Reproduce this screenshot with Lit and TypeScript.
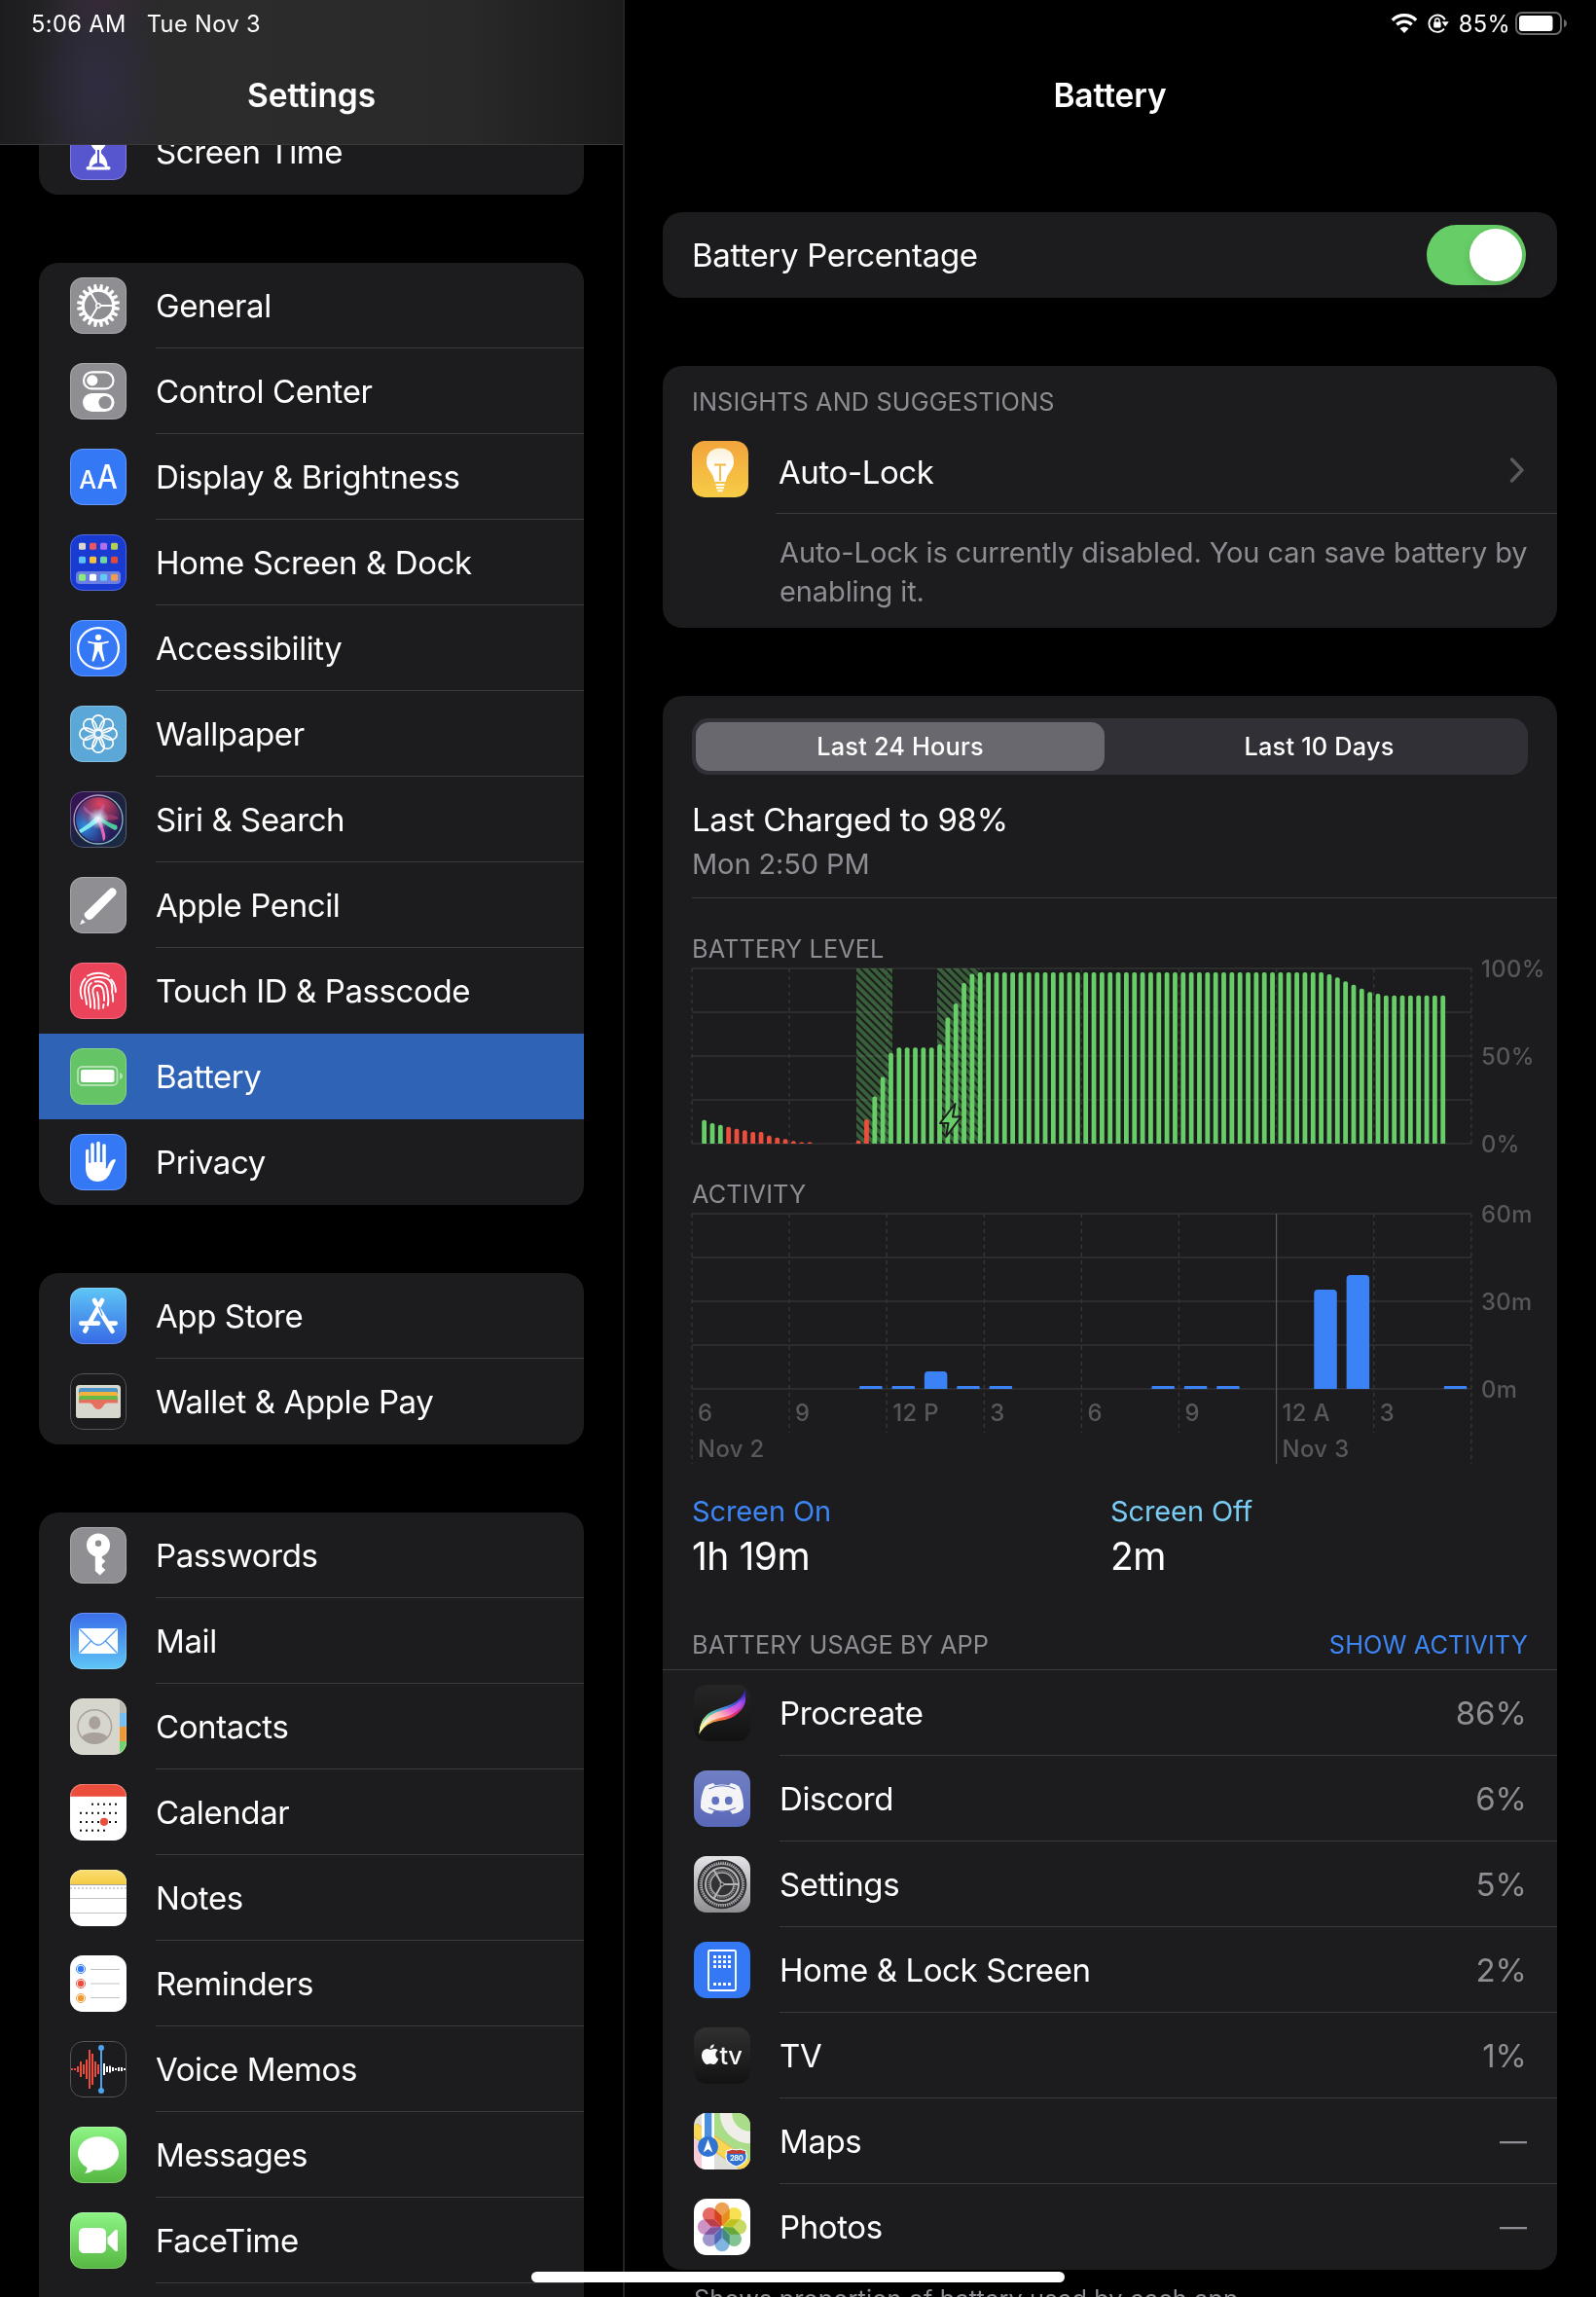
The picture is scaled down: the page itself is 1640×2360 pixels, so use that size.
import { LitElement, css, html, svg, nothing, SVGTemplateResult } from "lit"
import { customElement, property } from "lit/decorators.js"
import { classMap } from "lit/directives/class-map.js"

const FONT = css`Inter, "Liberation Sans", Arial, sans-serif`

const flat = (color: string) => svg`<rect width="58" height="58" fill=${color} />`

const fade = (from: string, to: string) => svg`
  <defs>
    <linearGradient id="bg" x1="0" y1="0" x2="0" y2="1">
      <stop offset="0" stop-color=${from} />
      <stop offset="1" stop-color=${to} />
    </linearGradient>
  </defs>
  <rect width="58" height="58" fill="url(#bg)" />
`

// outline of a cog centred on the 58px tile
const cog = (teeth: number, inner: number, outer: number, base = 0.34, tip = 0.2) => {
  const step = (Math.PI * 2) / teeth
  const at = (r: number, a: number) =>
    `${(29 + r * Math.cos(a)).toFixed(2)} ${(29 + r * Math.sin(a)).toFixed(2)}`
  let d = ""
  for (let i = 0; i < teeth; i++) {
    const a = (i + 0.5) * step
    d += `${i ? "L" : "M"}${at(inner, a - step * base)} L${at(outer, a - step * tip)} `
    d += `L${at(outer, a + step * tip)} L${at(inner, a + step * base)} `
  }
  return d + "Z"
}

const spin = (count: number, draw: (angle: number, i: number) => SVGTemplateResult) =>
  Array.from({ length: count }, (_, i) => draw((360 / count) * i, i))

const square = (x: number, y: number, size: number, fill: string, rx = 0) =>
  svg`<rect x=${x} y=${y} width=${size} height=${size} rx=${rx} fill=${fill} />`

const HOME_GRID = [
  [8.7, ["#d8d8d0", "#e8565f", "#b06ef0", "#b5d050"]],
  [22.7, ["#5fc0f5", "#f7c23c", "#70d6a5", "#e04a38"]],
  [40.7, ["#88ec7c", "#ffffff", "#62c8f8", "#ee9c55"]],
] as [number, string[]][]

const CALENDAR_ROWS = [
  [20.7, 2, 6],
  [29.8, 0, 6],
  [39, 0, 6],
  [47.7, 0, 4],
]

const MEMO_RED = [2, 2, 6, 16, 10, 20, 40, 32, 16, 10]
const MEMO_WHITE = [12, 6, 7, 4, 2, 4, 4, 2]

const PETALS = ["#ee9c48", "#f7e04a", "#c3d85a", "#7cc08c", "#7ab0e0", "#9a90cc", "#cc8dc2", "#e5625a"]

const ICONS: Record<string, () => SVGTemplateResult> = {
  "screen-time": () => svg`
    ${flat("#5856ce")}
    <path
      d="M18 9h22v3.500h-1.500c0 7-2.500 11.500-6.500 15v3c4 3.500 6.500 8.500 6.500 13.500h1.500q1.500 0 1.500 1.800t-1.500 1.800h-22q-1.500 0-1.500-1.800t1.500-1.800h1.500c0-5 2.500-10 6.500-13.500v-3c-4-3.500-6.500-8-6.500-15h-1.500z"
      fill="#fff"
    />
    <path d="M29 27v14" stroke="#5856ce" stroke-width="2" />
    <path d="M22 44.500q1.500-3.500 7-4.500 5.500 1 7 4.500z" fill="#5856ce" />
  `,
  general: () => svg`
    ${flat("#8e8e93")}
    <path fill="#fff" fill-rule="evenodd" d="${cog(20, 17.2, 22)} M29 14.8a14.2 14.2 0 1 0 0.01 0z" />
    <path d="M31.5 29H44M27.7 26.8L21.6 16.4M27.7 31.2L21.6 41.6" stroke="#fff" stroke-width="1.9" />
    <circle cx="29" cy="29" r="2.3" fill="#8e8e93" stroke="#fff" stroke-width="1.5" />
  `,
  control: () => svg`
    ${flat("#8e8e93")}
    <rect x="14" y="9.4" width="30.5" height="17" rx="8.5" fill="none" stroke="#fff" stroke-width="2.2" />
    <circle cx="22.8" cy="17.9" r="5.6" fill="#fff" />
    <rect x="13" y="31" width="32.5" height="19" rx="9.5" fill="#fff" />
    <circle cx="36" cy="40.5" r="6.6" fill="#8e8e93" />
  `,
  display: () => svg`
    ${flat("#3478f6")}
    <g fill="#fff" font-family="Inter, sans-serif" font-weight="500">
      <text x="9.3" y="40.5" font-size="25.5" textLength="17.5" lengthAdjust="spacingAndGlyphs">A</text>
      <text x="27.5" y="40.5" font-size="33.5" textLength="21" lengthAdjust="spacingAndGlyphs">A</text>
    </g>
  `,
  home: () => svg`
    ${flat("#1a3bd2")}
    <rect x="6" y="38" width="46" height="13" rx="4" fill="#fff" fill-opacity="0.35" />
    ${HOME_GRID.map(([y, colors]) => colors.map((c, i) => square(9 + i * 11, y, 7, c, 1.5)))}
  `,
  accessibility: () => svg`
    ${flat("#3478f6")}
    <circle cx="29" cy="29" r="20.9" fill="none" stroke="#fff" stroke-width="2.2" />
    <circle cx="29" cy="17.8" r="3.1" fill="#fff" />
    <path
      d="M18.6 21.4q5 1.5 10.4 1.5t10.4-1.5q1.2 1.2-.2 2.2l-6 1.2q-.3 5 .2 7.5l2.200 9.400q-1.200 1.800-2.400 0l-4-9.700h-.4l-4 9.700q-1.200 1.800-2.400 0l2.200-9.400q.5-2.500.2-7.500l-6-1.200q-1.400-1-.2-2.200z"
      fill="#fff"
    />
  `,
  wallpaper: () => svg`
    ${flat("#5ba8d8")}
    <g fill="none" stroke="#fff" stroke-width="1.7">
      ${spin(
        8,
        (a) => svg`<path
          transform="rotate(${a} 29 29)"
          d="M26.5 25.500Q22.900 19 22.900 16A6.100 6.100 0 0 1 35.100 16Q35.100 19 31.500 25.500"
        />`
      )}
      <circle cx="29" cy="29" r="3.8" />
    </g>
  `,
  siri: () => svg`
    <defs>
      <linearGradient id="bg" x1="0" y1="0" x2="1" y2="1">
        <stop offset="0" stop-color="#3a1159" />
        <stop offset="0.5" stop-color="#1b2340" />
        <stop offset="1" stop-color="#1c2b42" />
      </linearGradient>
      <radialGradient id="red" cx="0.55" cy="0.15" r="0.6">
        <stop offset="0" stop-color="#e0455f" />
        <stop offset="1" stop-color="#e0455f" stop-opacity="0" />
      </radialGradient>
      <radialGradient id="blue" cx="0.2" cy="0.65" r="0.6">
        <stop offset="0" stop-color="#2f8fe0" />
        <stop offset="1" stop-color="#2f6fe0" stop-opacity="0" />
      </radialGradient>
      <radialGradient id="glow">
        <stop offset="0" stop-color="#fff" />
        <stop offset="0.35" stop-color="#dff8ff" stop-opacity="0.7" />
        <stop offset="1" stop-color="#9fe8ff" stop-opacity="0" />
      </radialGradient>
      <linearGradient id="ring" x1="0" y1="0" x2="1" y2="1">
        <stop offset="0" stop-color="#d77fd0" />
        <stop offset="0.5" stop-color="#8fb5a8" />
        <stop offset="1" stop-color="#6fb2e0" />
      </linearGradient>
    </defs>
    <rect width="58" height="58" fill="url(#bg)" />
    <circle cx="29" cy="29" r="24" fill="#2a1c58" />
    <circle cx="29" cy="29" r="23" fill="url(#blue)" />
    <circle cx="29" cy="29" r="23" fill="url(#red)" />
    <path d="M29 28L14 15Q12 22 29 28zM29 28Q29 16 35 13Q37 20 29 28z" fill="#c56cb8" fill-opacity="0.55" />
    <path d="M29 28Q42 20 50 28Q42 31 29 28z" fill="#b04470" fill-opacity="0.6" />
    <path d="M27 26Q20 33 9 40L11 43Q22 37 31 30z" fill="#7fe9f2" />
    <path d="M28 28Q38 36 46 40Q50 39 48 35Q38 32 31 26z" fill="#4fc79c" />
    <path d="M27 28Q32 38 34 51Q37 50 36 44Q34 36 31 27z" fill="#e864b0" />
    <circle cx="29" cy="28" r="11" fill="url(#glow)" />
    <circle cx="29" cy="29" r="25" fill="none" stroke="url(#ring)" stroke-width="1.3" />
  `,
  pencil: () => svg`
    ${flat("#8e8e93")}
    <path
      d="M40.5 12.5q3-2.500 5.700 0t.4 5.900L23.500 42.300q-2.500 2.500-5.500 1.500-3-1.500-3.500-4.800-.2-1.500 1.500-2.800z"
      fill="#fff"
    />
    <path d="M10 49l2.500-5.500 3.200 3.200z" fill="#fff" />
    <path d="M13.5 40.5l5.500 5.500" stroke="#8e8e93" stroke-width="1.2" />
  `,
  touch: () => svg`
    ${flat("#eb445a")}
    <g fill="none" stroke="#fff" stroke-width="1.9" stroke-linecap="round">
      <path d="M18 13.5Q23 10.8 29 10.8T40 14.3" />
      <path d="M12.3 37Q10 31.5 11 25.5 12 20 15.5 16.5" />
      <path d="M42.5 17.5Q46.8 22.5 46.8 30" />
      <path d="M17 43Q16.5 38 15.5 34 12.5 15.5 29 15T43 30Q44.5 35 44 40" />
      <path d="M21 46Q21 39 19.5 32 17.5 24 22 21" />
      <path d="M25.5 19.5Q37.500 17.5 38.5 30 40 38 38.8 44" />
      <path d="M25.3 47Q25.5 38 23.5 31 22.5 24 29 23.5 34 24 34.5 31 35.3 36 35 39" />
      <path d="M29.5 47.5Q30 38 28 30.5" />
      <path d="M34.5 43L34 46.5" />
    </g>
  `,
  battery: () => svg`
    ${flat("#65c466")}
    <rect x="8" y="19" width="40.5" height="19" rx="4.5" fill="none" stroke="#fff" stroke-opacity="0.5" stroke-width="1.9" />
    <rect x="11" y="22" width="34.5" height="13" rx="2.5" fill="#fff" />
    <path d="M51 25v7q3-1 3-3.500t-3-3.500z" fill="#fff" fill-opacity="0.5" />
  `,
  privacy: () => svg`
    ${flat("#3478f6")}
    <g stroke="#fff" stroke-width="3.6" stroke-linecap="round">
      <path d="M17.8 17.5v15M23 11v20M29 9.500v20M35 12v20" />
    </g>
    <path
      d="M16 29h20.800v6.500l1.300-.3q2.500-7 5.700-8.700 2.300-1 3.200.5-2.500 5-4.300 9.500-4 12.500-13.700 12.500-12 0-13-13z"
      fill="#fff"
    />
    <path d="M20.3 17v13M26 11v18M32 11v18" stroke="#3478f6" stroke-width="1.6" />
  `,
  appstore: () => svg`
    ${fade("#5fc6f5", "#3669e6")}
    <g stroke="#fff" stroke-width="4.6" stroke-linecap="round">
      <path d="M33 13L20.300 35.5M17 41.5L15.300 44.5M25 13L27 16.5M30.5 23.5L43.5 44.8" />
      <path d="M11.3 36.6H29M39 36.6H46.7" />
    </g>
    <path d="M29.5 19.5L33 28.5" stroke="#4a97ee" stroke-width="1.2" />
  `,
  wallet: () => svg`
    ${flat("#1c1c1e")}
    <rect x="6" y="12" width="46" height="34" rx="3.5" fill="#d8d7ce" />
    <rect x="9" y="15" width="40" height="12" rx="2.5" fill="#4a94c8" />
    <rect x="9" y="19" width="40" height="10" rx="2.5" fill="#f3b23c" />
    <rect x="9" y="23" width="40" height="8" rx="2.5" fill="#66b944" />
    <rect x="9" y="27" width="40" height="5" rx="2" fill="#e5705f" />
    <path d="M9 30h40v1.500H38q-3 1-4.500 4-2 2.500-4.500 2.500t-4.500-2.500q-1.500-3-4.500-4H9z" fill="#e5705f" />
    <path
      d="M6 30.5h14q3 .5 4.500 4 2 2.500 4.500 2.500t4.500-2.500q1.500-3.500 4.500-4h14V42.5q0 3.500-3.500 3.500h-39q-3.500 0-3.500-3.500z"
      fill="#d8d7ce"
    />
  `,
  passwords: () => svg`
    ${flat("#8e8e93")}
    <circle cx="29" cy="18.6" r="12" fill="#fff" />
    <path d="M25.8 28h7v4l3.500 3-3.500 3.500v2.500l3.500 3-5.600 5.500-4.900-4.500z" fill="#fff" />
    <circle cx="29" cy="16.8" r="3.2" fill="#8e8e93" />
  `,
  mail: () => svg`
    ${fade("#3a6de8", "#5fc6f6")}
    <rect x="9" y="16" width="40" height="26" rx="1" fill="#fff" />
    <path
      d="M9.5 16.5L24 31Q29 35.500 34 31L48.5 16.5M9.5 41.5L21.5 29M48.5 41.5L36.5 29"
      fill="none"
      stroke="#4d9cf0"
      stroke-width="1.3"
    />
  `,
  contacts: () => svg`
    ${flat("#d6d6cc")}
    <rect x="51" width="7" height="15" fill="#b9b9b0" />
    <rect x="51" y="15" width="7" height="14" fill="#74c0f5" />
    <rect x="51" y="29" width="7" height="15" fill="#ee9836" />
    <rect x="51" y="44" width="7" height="14" fill="#72d36e" />
    <circle cx="25.3" cy="29" r="17.3" fill="none" stroke="#a8a19a" stroke-width="1.5" />
    <ellipse cx="25.3" cy="25" rx="6" ry="6.7" fill="#a8a19a" />
    <path d="M12 39.5q4-4.500 13.300-4.500t13.300 4.500q-5 6.800-13.300 6.800t-13.300-6.800z" fill="#a8a19a" />
  `,
  calendar: () => svg`
    ${flat("#ffffff")}
    <rect width="58" height="12.8" fill="#eb4e3d" />
    ${CALENDAR_ROWS.map(([y, from, to]) =>
      Array.from({ length: to - from + 1 }, (_, i) => square(10 + (from + i) * 6, y - 1, 2, "#111"))
    )}
    <circle cx="35" cy="38.8" r="4.1" fill="#eb4e3d" />
  `,
  notes: () => svg`
    ${flat("#ffffff")}
    <defs>
      <linearGradient id="top" x1="0" y1="0" x2="0" y2="1">
        <stop offset="0" stop-color="#fadf75" />
        <stop offset="1" stop-color="#f6cb42" />
      </linearGradient>
    </defs>
    <rect width="58" height="15" fill="url(#top)" />
    <path d="M0 15.5H58" stroke="#a3a3a3" stroke-width="1.2" />
    <path d="M0 19H58" stroke="#cfcfcf" stroke-width="1.8" stroke-dasharray="2 2" />
    <path d="M0 29.5H58M0 44.5H58" stroke="#c4c4c6" />
  `,
  reminders: () => svg`
    ${flat("#ffffff")}
    ${["#3478f6", "#eb4e3d", "#f09a37"].map(
      (c, i) => svg`
        <circle cx="11" cy=${14 + i * 15} r="4.6" fill="none" stroke=${c} stroke-width="0.9" />
        <circle cx="11" cy=${14 + i * 15} r="3.2" fill=${c} />
        <path d="M21 ${14.5 + i * 14.5}H51" stroke="#c4c4c6" />
      `
    )}
  `,
  memos: () => svg`
    ${flat("#1c1c1e")}
    ${MEMO_RED.map((h, i) => svg`<rect x=${1 + i * 3} y=${29 - h / 2} width="2" height=${h} fill="#eb4e3d" />`)}
    ${MEMO_WHITE.map((h, i) => svg`<rect x=${34 + i * 3} y=${29 - h / 2} width="2" height=${h} fill="#fff" />`)}
    <path d="M32 7V51" stroke="#4ea3ef" stroke-width="2" />
    <circle cx="32" cy="7" r="3" fill="#4ea3ef" />
    <circle cx="32" cy="51" r="3" fill="#4ea3ef" />
  `,
  messages: () => svg`
    ${fade("#8df586", "#55b741")}
    <ellipse cx="29" cy="27.5" rx="21" ry="17.3" fill="#fff" />
    <path d="M17 40.5q1.500 4-2 7.300 6 0 10-4.300z" fill="#fff" />
  `,
  facetime: () => svg`
    ${fade("#8df586", "#55b741")}
    <rect x="9" y="16" width="28" height="26" rx="5.5" fill="#fff" />
    <path d="M38.5 26L46 18.5q3-2 3 1.200v18.600q0 3.200-3 1.200L38.5 32z" fill="#fff" />
  `,
  bulb: () => svg`
    ${fade("#f2a43c", "#f7cd46")}
    <defs>
      <linearGradient id="glass" x1="0" y1="0" x2="0" y2="1">
        <stop offset="0" stop-color="#fdf0d6" />
        <stop offset="0.6" stop-color="#fff" />
      </linearGradient>
    </defs>
    <path
      d="M29 7.5q14 .5 14 14 0 5-3.500 9.500-4 5-5 11h-11q-1-6-5-11-3.500-4.500-3.500-9.500 0-13.500 14-14z"
      fill="url(#glass)"
    />
    <path d="M23 24.5H35M29 24.5V41" stroke="#f5b741" stroke-width="1.8" />
    <path d="M24.5 45H33.5M25 48.3H33M26.5 51.3H31.5" stroke="#fff" stroke-width="2" />
  `,
  procreate: () => svg`
    ${fade("#262626", "#121212")}
    <defs>
      <linearGradient id="ribbon" x1="0" y1="1" x2="1" y2="0">
        <stop offset="0.05" stop-color="#fff6a0" />
        <stop offset="0.2" stop-color="#fff3d8" />
        <stop offset="0.45" stop-color="#ffb3b8" />
        <stop offset="0.62" stop-color="#e45ccf" />
        <stop offset="0.8" stop-color="#a24ff0" />
        <stop offset="0.95" stop-color="#3a22b0" />
      </linearGradient>
      <linearGradient id="cool" x1="0" y1="1" x2="1" y2="0">
        <stop offset="0.1" stop-color="#e8f58a" />
        <stop offset="0.35" stop-color="#49c7a6" />
        <stop offset="0.6" stop-color="#3d7fe6" />
        <stop offset="0.9" stop-color="#3520a8" />
      </linearGradient>
      <linearGradient id="warm" x1="0" y1="1" x2="1" y2="0">
        <stop offset="0.1" stop-color="#f6e04c" />
        <stop offset="0.4" stop-color="#ef6a3a" />
        <stop offset="0.65" stop-color="#e0266a" />
        <stop offset="0.9" stop-color="#9a40e8" />
      </linearGradient>
    </defs>
    <path d="M53 5Q55 20 45 29 39 35 26 36.5 11 38.5 5.500 51 6 34 18 28 24 25 34 22 48 18 53 5z" fill="url(#ribbon)" />
    <path d="M53 5Q48 17 35 21.5 27 24 21 26.5 6 32 5.500 51 9 34 22 28.5 30 26 37 23.5 50 18 53 5z" fill="url(#cool)" />
    <path d="M53 12Q54 22 45 29.5 39 35.5 26 37 14 38.5 7 48 12 38 25 34.5 37 32.5 43 28 51 22 53 12z" fill="url(#warm)" />
  `,
  discord: () => svg`
    ${fade("#7080c4", "#5868b8")}
    <path
      d="M20 13l1.800 2.300q7.200-1.500 14.400 0L38 13q5 .8 8.500 3.500Q51.500 26.500 51 38.500 47.500 44 39.500 44.700L37 41.3q-8 1.800-16 0L18.500 44.700Q10.500 44 7 38.500 6.500 26.500 11.500 16.500 15 13.800 20 13z"
      fill="#f4f4f6"
    />
    <path d="M15.5 19Q29 12.500 42.5 19M15 38.5Q29 45.500 43 38.5" fill="none" stroke="#6172bf" stroke-width="1.2" />
    <ellipse cx="22.2" cy="31" rx="3.9" ry="4.2" fill="#6172bf" />
    <ellipse cx="35.8" cy="31" rx="3.9" ry="4.2" fill="#6172bf" />
  `,
  settings: () => svg`
    ${fade("#e4e4e9", "#8e8e93")}
    <circle cx="29" cy="29" r="25.3" fill="#2e2e30" />
    <path d=${cog(60, 20, 23.4, 0.5, 0.2)} fill="#a9a9ae" />
    <circle cx="29" cy="29" r="20.3" fill="#323234" />
    <circle cx="29" cy="29" r="17" fill="none" stroke="#b4b4b9" stroke-width="2" />
    <circle cx="29" cy="29" r="13.8" fill="none" stroke="#8f8f94" stroke-width="2" stroke-dasharray="1.1 1" />
    <circle cx="29" cy="29" r="12" fill="#323234" stroke="#aaaaaf" stroke-width="1.5" />
    <path d="M29 29H47M29 29L20 13.4M29 29L20 44.6" stroke="#b4b4b9" stroke-width="2" />
    <circle cx="29" cy="29" r="2" fill="#323234" stroke="#b4b4b9" stroke-width="1" />
  `,
  lockscreen: () => svg`
    ${flat("#3478f6")}
    <rect x="15" y="9" width="28" height="41" rx="1.5" fill="none" stroke="#fff" stroke-width="1.9" />
    ${[14, 19, 24, 42].map((y) => [20, 25, 30, 35].map((x) => square(x, y, 3, "#fff", 0.5)))}
  `,
  tv: () => svg`
    ${fade("#303030", "#121212")}
    <path
      d="M24.8 23.2q-2.500 1.600-2.500 4.500 0 3.200 3 4.700-1.200 3-3 4.800-1.600 1.300-3.300.5-2.200-1-4.400 0-1.700.8-3.200-.6Q7.900 33 8 28.5q.5-6 5.200-6.600 1.500 0 3.300.9.700.2 1.400-.1 4-1.800 6.900.5zM20.700 17.3q.2 1.900-1 3.300t-3 1.500q-.3-1.800 1-3.300 1.200-1.300 3-1.500z"
      fill="#fafafa"
    />
    <text x="26.5" y="37.5" font-family="Inter, sans-serif" font-size="25" font-weight="500" fill="#fafafa" textLength="23" lengthAdjust="spacingAndGlyphs">tv</text>
  `,
  maps: () => svg`
    ${flat("#dedfd8")}
    <path d="M21 0H58V58L21 30z" fill="#a9dd88" />
    <path d="M33 0A25 25 0 0 0 58 25" fill="none" stroke="#efeee9" stroke-width="12.5" />
    <path d="M-1 16L58 57" stroke="#f0b64a" stroke-width="14" />
    <path d="M-1 16L58 57" stroke="#f9d654" stroke-width="12" />
    <path d="M-1 58V26L8 32V58z" fill="#f7ccd6" />
    <rect x="8" width="13" height="58" fill="#fff" />
    <rect x="11" width="7.3" height="29" fill="#4a90dd" />
    <circle cx="14.5" cy="34.5" r="10.5" fill="#2f74d4" />
    <path d="M14.5 27L19.3 40.5L14.5 37L9.7 40.5z" fill="#fff" />
    <path
      d="M34 38.5q3.500 0 5-1.500 4.500 1.800 9.200 0 1.600 1.500 5 1.500-.5 1.800.9 4.500 1.600 8-10.500 12-12-4-10.500-12 1.400-2.700.9-4.500z"
      fill="#2f74d4"
      stroke="#fff"
      stroke-width="1.2"
    />
    <path d="M34.5 38.9q3 0 4.700-1.200 4.300 1.500 8.800 0 1.700 1.200 4.700 1.200l.3 2.800H34.200z" fill="#c5392f" />
    <text x="37" y="49.3" font-family="Inter, sans-serif" font-size="7.5" font-weight="700" fill="#fff" textLength="13.5" lengthAdjust="spacingAndGlyphs">280</text>
  `,
  photos: () => svg`
    ${flat("#ffffff")}
    ${spin(
      8,
      (a, i) => svg`<path
        class="petal"
        transform="rotate(${a} 29 29)"
        d="M29 29L21.3 20.5V11.500A7.700 7.700 0 0 1 36.700 11.500V20.5z"
        fill=${PETALS[i]}
      />`
    )}
    <circle cx="29" cy="29" r="1.5" fill="#fff" />
  `,
}

@customElement("app-icon")
export class AppIcon extends LitElement {
  @property() name = ""
  @property({ type: Boolean, reflect: true }) outlined = false

  static styles = css`
    :host {
      display: block;
      position: relative;
      flex: none;
      width: 58px;
      height: 58px;
      border-radius: 13px;
      overflow: hidden;
    }
    :host([outlined])::after {
      content: "";
      position: absolute;
      inset: 0;
      border: 1px solid rgba(255, 255, 255, 0.25);
      border-radius: 13px;
    }
    svg {
      display: block;
    }
    .petal {
      mix-blend-mode: multiply;
      opacity: 0.95;
    }
  `

  render() {
    return html`<svg width="58" height="58" viewBox="0 0 58 58">${ICONS[this.name]?.() ?? nothing}</svg>`
  }
}

const PLOT_WIDTH = 800.8
const THREE_HOURS = PLOT_WIDTH / 8

// quarter hour readings, in percent
const LEVELS: number[] = [
  0, 13.5, 11.7, 10.7, 9.6, 8.5, 7.6, 6.7, 6.7, 4.6, 3.5, 2.6, 1.5, 0.9, 0.9, 0, 0, 0, 0, 0,
  1.8, 13.9, 27, 38, 51.8, 54.8, 54.8, 54.8, 54.8, 54.8, 56.7, 72, 80, 91.7, 96.9,
  ...Array(43).fill(97.8),
  96.7, 94.8, 92.6, 90.7, 88.5, 86.5, 85.6,
  ...Array(8).fill(84.6),
]
const isLow = (i: number) => (i >= 4 && i <= 14) || i === 20 || i === 21

const CHARGING = [
  [169, 37],
  [252, 43.5],
]

// hour slot -> bar height
const ACTIVITY = [
  [5, 3], [6, 3], [7, 18], [8, 3], [9, 3],
  [14, 3], [15, 3], [16, 3],
  [19, 102], [20, 117], [23, 3],
]

const HOURS = ["6", "9", "12 P", "3", "6", "9", "12 A", "3"]

@customElement("battery-chart")
export class BatteryChart extends LitElement {
  @property() kind: "level" | "activity" = "level"

  static styles = css`
    :host {
      display: block;
    }
    svg {
      display: block;
      overflow: visible;
    }
    .grid {
      stroke: #2c2c2e;
      stroke-width: 2;
    }
    .tick {
      stroke: #363638;
      stroke-width: 1.4;
      stroke-dasharray: 4 4;
    }
    .midnight {
      stroke: #58585b;
      stroke-width: 1.2;
    }
    .charge {
      fill: #66ce67;
      fill-opacity: 0.38;
    }
    .good {
      fill: #67ce67;
    }
    .low {
      fill: #eb4e3d;
    }
    .used {
      fill: #3b82f7;
    }
    .bolt {
      fill: #67ce67;
      stroke: #1c1c1e;
      stroke-width: 2;
      stroke-linejoin: round;
    }
    text {
      font-family: ${FONT};
      font-size: 23.8px;
      font-weight: 500;
      letter-spacing: 0.4px;
      fill: #58585c;
    }
  `

  bar(x: number, width: number, height: number, radius: number, cls: string) {
    const r = Math.min(radius, height)
    const top = 185 - height
    return svg`<path
      class=${cls}
      d="M${x} 185V${top + r}Q${x} ${top} ${x + r} ${top}H${x + width - r}Q${x + width} ${top} ${x + width} ${top + r}V185z"
    />`
  }

  grid(labels: string[]) {
    return svg`
      ${[5, 50, 95, 140, 185].map((y) => svg`<path class="grid" d="M0 ${y}H801" />`)}
      ${labels.map((label, i) => svg`<text x="811" y=${14 + i * 90}>${label}</text>`)}
    `
  }

  ticks(bottom: (i: number) => number) {
    return Array.from({ length: 9 }, (_, i) => {
      const midnight = this.kind === "activity" && i === 6
      return svg`<path class=${midnight ? "midnight" : "tick"} d="M${i * THREE_HOURS} 5V${bottom(i)}" />`
    })
  }

  renderLevel() {
    const slot = PLOT_WIDTH / 96
    return html`<svg width="889" height="200" viewBox="0 0 889 200">
      <defs>
        <pattern id="hatch" width="6" height="6" patternUnits="userSpaceOnUse" patternTransform="rotate(-45)">
          <rect class="charge" width="4" height="6" />
        </pattern>
      </defs>
      ${this.grid(["100%", "50%", "0%"])} ${this.ticks(() => 185)}
      ${CHARGING.map(([x, w]) => svg`<rect x=${x} y="5" width=${w} height="180" fill="url(#hatch)" />`)}
      ${LEVELS.map((level, i) =>
        level ? this.bar(slot * i + 1.9, 4.8, level * 1.8, 2, isLow(i) ? "low" : "good") : nothing
      )}
      <path class="bolt" d="M270.5 144L255 164H263.5L261 178L276.5 157.5H268z" />
    </svg>`
  }

  renderActivity() {
    const slot = PLOT_WIDTH / 24
    return html`<svg width="889" height="268" viewBox="0 0 889 268">
      ${this.grid(["60m", "30m", "0m"])} ${this.ticks((i) => (i === 0 || i === 6 || i === 8 ? 262 : 230))}
      ${ACTIVITY.map(([hour, h]) => this.bar(slot * hour + 5.3, 23.5, h, h > 10 ? 4 : 1, "used"))}
      ${HOURS.map((label, i) => svg`<text x=${6 + i * THREE_HOURS} y="218">${label}</text>`)}
      <text x="6" y="255">Nov 2</text>
      <text x=${6 + 6 * THREE_HOURS} y="255">Nov 3</text>
    </svg>`
  }

  render() {
    return this.kind === "level" ? this.renderLevel() : this.renderActivity()
  }
}

type Entry = [icon: string, label: string]

const MENU: Entry[][] = [
  [["screen-time", "Screen Time"]],
  [
    ["general", "General"],
    ["control", "Control Center"],
    ["display", "Display & Brightness"],
    ["home", "Home Screen & Dock"],
    ["accessibility", "Accessibility"],
    ["wallpaper", "Wallpaper"],
    ["siri", "Siri & Search"],
    ["pencil", "Apple Pencil"],
    ["touch", "Touch ID & Passcode"],
    ["battery", "Battery"],
    ["privacy", "Privacy"],
  ],
  [
    ["appstore", "App Store"],
    ["wallet", "Wallet & Apple Pay"],
  ],
  [
    ["passwords", "Passwords"],
    ["mail", "Mail"],
    ["contacts", "Contacts"],
    ["calendar", "Calendar"],
    ["notes", "Notes"],
    ["reminders", "Reminders"],
    ["memos", "Voice Memos"],
    ["messages", "Messages"],
    ["facetime", "FaceTime"],
  ],
]

const USAGE: [string, string, string][] = [
  ["procreate", "Procreate", "86%"],
  ["discord", "Discord", "6%"],
  ["settings", "Settings", "5%"],
  ["lockscreen", "Home & Lock Screen", "2%"],
  ["tv", "TV", "1%"],
  ["maps", "Maps", "—"],
  ["photos", "Photos", "—"],
]

@customElement("app-root")
export class AppRoot extends LitElement {
  @property() selected = "Battery"

  static styles = css`
    :host {
      display: grid;
      grid-template-columns: 640px 1fr;
      width: 1640px;
      height: 2360px;
      overflow: hidden;
      position: relative;
      background: #000;
      color: #fff;
      font-family: ${FONT};
      font-size: 33px;
      letter-spacing: -0.4px;
    }
    * {
      box-sizing: border-box;
    }
    .sidebar {
      display: flex;
      flex-direction: column;
      min-height: 0;
      height: 2360px;
      overflow: hidden;
    }
    .head {
      flex: none;
      height: 149px;
    }
    .sidebar .head {
      border-bottom: 1px solid #3a3a3c;
      background:
        radial-gradient(ellipse 70px 130px at 100px 90px, rgba(52, 46, 76, 0.65), transparent),
        radial-gradient(ellipse 60px 40px at 100px 0, rgba(70, 40, 56, 0.45), transparent),
        linear-gradient(90deg, #1c1c1f, #29292b 90px, #2c2c2c 240px, #292929 480px, #1b1b1b);
    }
    .status {
      display: flex;
      align-items: center;
      height: 48px;
      font-size: 23.6px;
      letter-spacing: 0.4px;
    }
    .sidebar .status {
      padding-left: 32px;
      gap: 21px;
    }
    .detail .status {
      justify-content: flex-end;
      margin-right: -11px;
    }
    .wifi {
      margin-right: 10px;
    }
    .lock {
      margin-right: 10px;
    }
    .cell {
      margin-left: 5px;
    }
    .title {
      margin: 0;
      height: 100px;
      font-size: 33.5px;
      font-weight: 600;
      line-height: 100px;
      text-align: center;
      letter-spacing: -0.1px;
    }
    .menu {
      flex: 1;
      min-height: 0;
      overflow: hidden;
      padding: 0 40px;
    }
    .card {
      border-radius: 20px;
      background: #1c1c1e;
      overflow: hidden;
    }
    .menu .card {
      margin-bottom: 70px;
    }
    .menu .card:first-child {
      margin-top: -37px;
    }
    .menu .card:last-child {
      padding-bottom: 40px;
    }
    .row {
      display: flex;
      align-items: center;
      height: 88px;
      padding-left: 32px;
      gap: 30px;
    }
    .row .text {
      display: flex;
      flex: 1;
      align-items: center;
      justify-content: space-between;
      height: 88px;
      border-bottom: 1px solid #3b3b3e;
      white-space: nowrap;
    }
    .row.plain .text {
      border-color: transparent;
    }
    .row.selected {
      background: #2e63b5;
    }
    .detail {
      border-left: 2px solid #242426;
      padding: 0 40px 0 39px;
    }
    .detail .title {
      margin-bottom: 70px;
    }
    .detail .card {
      margin-bottom: 70px;
    }
    .toggle-row {
      display: flex;
      align-items: center;
      justify-content: space-between;
      height: 88px;
      padding: 0 32px 0 30px;
      letter-spacing: -0.3px;
    }
    .switch {
      display: flex;
      justify-content: flex-end;
      width: 102px;
      height: 62px;
      padding: 4px;
      border-radius: 31px;
      background: #67ce67;
    }
    .knob {
      width: 54px;
      height: 54px;
      border-radius: 50%;
      background: #fff;
      box-shadow: 0 4px 10px rgba(0, 0, 0, 0.15);
    }
    .caption {
      font-size: 25.3px;
      line-height: 30px;
      letter-spacing: 0.1px;
      color: #8d8d93;
    }
    .insights {
      height: 269px;
      padding-top: 22px;
    }
    .insights .caption {
      padding-left: 30px;
    }
    .tip {
      display: flex;
      height: 100px;
      padding-left: 30px;
    }
    .tip app-icon {
      margin-top: 25px;
    }
    .tip .text {
      display: flex;
      flex: 1;
      align-items: center;
      justify-content: space-between;
      margin-left: 28px;
      padding: 14px 33px 0 3px;
      border-bottom: 1px solid #3b3b3e;
    }
    .tip svg {
      margin-bottom: 3px;
    }
    .hint {
      margin: 0;
      padding: 20px 0 0 120px;
      font-size: 29px;
      line-height: 40px;
      letter-spacing: -0.1px;
      color: #8d8d93;
      white-space: nowrap;
    }
    .usage {
      padding-top: 23px;
    }
    .segments {
      display: grid;
      grid-template-columns: 420px 1fr;
      column-gap: 6px;
      margin: 0 30px;
      height: 58px;
      padding: 4px 0 4px 4px;
      border-radius: 17px;
      background: #313036;
      font-size: 25.3px;
      font-weight: 500;
      line-height: 50px;
      letter-spacing: 0.2px;
      text-align: center;
    }
    .segment.on {
      border-radius: 14px;
      background: #69686e;
    }
    .charged {
      margin: 24px 0 0 30px;
      padding-bottom: 14px;
      border-bottom: 1px solid #3b3b3e;
      line-height: 44px;
      letter-spacing: -0.3px;
    }
    .when {
      margin-top: 4px;
      font-size: 29px;
      line-height: 40px;
      letter-spacing: -0.1px;
      color: #8d8d93;
    }
    .graphs {
      padding-left: 30px;
    }
    .graphs .caption {
      margin-top: 37px;
    }
    .graphs .caption ~ .caption {
      margin-top: 22px;
    }
    .totals {
      display: grid;
      grid-template-columns: 430px 1fr;
      margin-top: 25px;
      padding-left: 30px;
      font-size: 29px;
      line-height: 36px;
      letter-spacing: -0.1px;
    }
    .on-label {
      color: #3d86f6;
    }
    .off-label {
      color: #79cdf5;
    }
    .amount {
      margin-top: 4px;
      font-size: 39px;
      line-height: 48px;
      letter-spacing: -0.5px;
    }
    .by-app {
      display: flex;
      justify-content: space-between;
      margin-top: 52px;
      padding: 0 30px 10px;
      border-bottom: 1px solid #3b3b3e;
    }
    .by-app .link {
      color: #3d86f6;
    }
    .usage .row {
      padding-left: 32px;
    }
    .usage .row .text {
      padding: 0 31px 0 0;
    }
    .value {
      letter-spacing: 0;
      color: #8d8d93;
    }
    .value.none {
      font-size: 28px;
    }
    .detail .card.usage {
      margin-bottom: 15px;
    }
    .footer {
      padding-left: 32px;
      white-space: nowrap;
    }
    .indicator {
      position: absolute;
      left: 546px;
      bottom: 15px;
      width: 548px;
      height: 11px;
      border-radius: 6px;
      background: #fff;
    }
  `

  renderRow([icon, label]: Entry, i: number, group: Entry[]) {
    const selected = label === this.selected
    const beforeSelected = group[i + 1]?.[1] === this.selected
    // the last group runs on below the fold
    const last = i === group.length - 1 && group !== MENU[MENU.length - 1]
    return html`<div class=${classMap({ row: true, selected, plain: selected || beforeSelected || last })}>
      <app-icon name=${icon} outlined></app-icon>
      <div class="text">${label}</div>
    </div>`
  }

  renderStatusIcons() {
    return html`
      <svg class="wifi" width="28" height="20" viewBox="0 0 28 20">
        <path
          d="M1.8 6.7Q7 1.7 14 1.7T26.2 6.7M6.3 11.3Q9.7 8.2 14 8.2T21.7 11.3"
          fill="none"
          stroke="#fff"
          stroke-width="3.3"
        />
        <path d="M9.5 15.3Q14 11.8 18.5 15.3L14 20z" fill="#fff" />
      </svg>
      <svg class="lock" width="22" height="20" viewBox="0 0 22 20">
        <path d="M17.8 6.2A8.7 8.7 0 1 0 17 15.5" fill="none" stroke="#fff" stroke-width="1.9" />
        <path d="M14.5 8.3h7.300l-3.600 5z" fill="#fff" />
        <rect x="6.2" y="8.6" width="7.4" height="5.8" rx="0.8" fill="#fff" />
        <path d="M7.7 9V7.2a2.200 2.200 0 0 1 4.400 0V9" fill="none" stroke="#fff" stroke-width="1.3" />
      </svg>
      <span>85%</span>
      <svg class="cell" width="54" height="24" viewBox="0 0 54 24">
        <rect x="1" y="1" width="46" height="22" rx="6" fill="none" stroke="#6b6b6b" stroke-width="1.9" />
        <rect x="4" y="4" width="34.5" height="16" rx="3" fill="#fff" />
        <path d="M50 8v8q3-1 3-4t-3-4z" fill="#6b6b6b" />
      </svg>
    `
  }

  renderUsage([icon, label, value]: [string, string, string], i: number) {
    return html`<div class=${classMap({ row: true, plain: i === USAGE.length - 1 })}>
      <app-icon name=${icon}></app-icon>
      <div class="text">
        <span>${label}</span>
        <span class=${classMap({ value: true, none: value === "—" })}>${value}</span>
      </div>
    </div>`
  }

  render() {
    return html`
      <nav class="sidebar">
        <header class="head">
          <div class="status"><span>5:06 AM</span><span>Tue Nov 3</span></div>
          <h1 class="title">Settings</h1>
        </header>
        <div class="menu">
          ${MENU.map((group) => html`<section class="card">${group.map((e, i) => this.renderRow(e, i, group))}</section>`)}
        </div>
      </nav>
      <main class="detail">
        <div class="status">${this.renderStatusIcons()}</div>
        <h1 class="title">Battery</h1>
        <section class="card toggle-row">
          <span>Battery Percentage</span>
          <div class="switch"><div class="knob"></div></div>
        </section>
        <section class="card insights">
          <div class="caption">INSIGHTS AND SUGGESTIONS</div>
          <div class="tip">
            <app-icon name="bulb"></app-icon>
            <div class="text">
              <span>Auto-Lock</span>
              <svg width="16" height="26" viewBox="0 0 16 26">
                <path d="M2.5 2L13 13L2.5 24" fill="none" stroke="#5a5a5e" stroke-width="3.4" stroke-linecap="round" stroke-linejoin="round" />
              </svg>
            </div>
          </div>
          <p class="hint">Auto-Lock is currently disabled. You can save battery by<br />enabling it.</p>
        </section>
        <section class="card usage">
          <div class="segments">
            <div class="segment on">Last 24 Hours</div>
            <div class="segment">Last 10 Days</div>
          </div>
          <div class="charged">
            <div>Last Charged to 98%</div>
            <div class="when">Mon 2:50 PM</div>
          </div>
          <div class="graphs">
            <div class="caption">BATTERY LEVEL</div>
            <battery-chart kind="level"></battery-chart>
            <div class="caption">ACTIVITY</div>
            <battery-chart kind="activity"></battery-chart>
          </div>
          <div class="totals">
            <div>
              <div class="on-label">Screen On</div>
              <div class="amount">1h 19m</div>
            </div>
            <div>
              <div class="off-label">Screen Off</div>
              <div class="amount">2m</div>
            </div>
          </div>
          <div class="caption by-app">
            <span>BATTERY USAGE BY APP</span>
            <span class="link">SHOW ACTIVITY</span>
          </div>
          ${USAGE.map((u, i) => this.renderUsage(u, i))}
        </section>
        <div class="caption footer">Shows proportion of battery used by each app.</div>
      </main>
      <div class="indicator"></div>
    `
  }
}

declare global {
  interface HTMLElementTagNameMap {
    "app-root": AppRoot
    "app-icon": AppIcon
    "battery-chart": BatteryChart
  }
}
